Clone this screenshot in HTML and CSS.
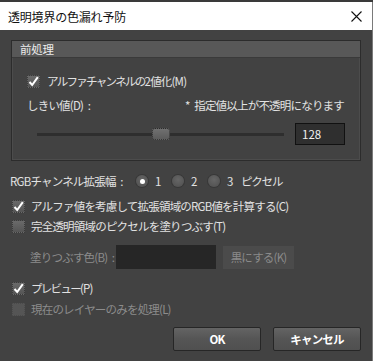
FILE: index.html
```html
<!DOCTYPE html>
<html lang="ja">
<head>
<meta charset="utf-8">
<link rel="stylesheet" href="styles.css">
</head>
<body>
<div class="window">
  <div class="titlebar">
    <span class="title">透明境界の色漏れ予防</span>
    <svg class="close" width="11" height="11" viewBox="0 0 11 11"><path d="M0.5 0.5 L10.5 10.5 M10.5 0.5 L0.5 10.5" stroke="#111" stroke-width="1.1" fill="none"/></svg>
  </div>
  <div class="content">
    <div class="group">
      <div class="group-head">前処理</div>
      <div class="group-body">
        <div class="row check-row g-first">
          <span class="cb checked"><svg width="11" height="11" viewBox="0 0 11 11"><path d="M1.5 6 L4.2 9 L9.8 1.2" stroke="#fff" stroke-width="2" fill="none"/></svg></span>
          <span><span class="kana">アルファチャンネルの</span>2値化(M)</span>
        </div>
        <div class="row thr-row">
          <span>しきい値(D)<span class="sp"> </span>:</span>
          <span>*<span class="sp"> </span>指定値以上が不透明になります</span>
        </div>
        <div class="row slider-row">
          <div class="track"><div class="thumb"></div></div>
          <div class="valbox">128</div>
        </div>
      </div>
    </div>

    <div class="row rgb-row">
      <span class="rgb-label">RGBチャンネル拡張幅<span class="sp"> </span>:</span>
      <span class="opt"><span class="radio on"></span><span>1</span></span>
      <span class="opt"><span class="radio"></span><span>2</span></span>
      <span class="opt opt3"><span class="radio"></span><span>3</span></span>
      <span class="kana-s">ピクセル</span>
    </div>

    <div class="row check-row main-check m1">
      <span class="cb checked"><svg width="11" height="11" viewBox="0 0 11 11"><path d="M1.5 6 L4.2 9 L9.8 1.2" stroke="#fff" stroke-width="2" fill="none"/></svg></span>
      <span>アルファ値を考慮して拡張領域のRGB値を計算する(C)</span>
    </div>
    <div class="row check-row main-check m2">
      <span class="cb"></span>
      <span>完全透明領域のピクセルを塗りつぶす(T)</span>
    </div>

    <div class="row fill-row">
      <span class="fill-label">塗りつぶす色(B)<span class="sp"> </span>:</span>
      <div class="colorbox"></div>
      <div class="btn-disabled">黒にする(K)</div>
    </div>

    <div class="row check-row main-check m3">
      <span class="cb checked"><svg width="11" height="11" viewBox="0 0 11 11"><path d="M1.5 6 L4.2 9 L9.8 1.2" stroke="#fff" stroke-width="2" fill="none"/></svg></span>
      <span><span class="kana">プレビュー</span>(P)</span>
    </div>
    <div class="row check-row main-check m4 disabled">
      <span class="cb dis"></span>
      <span>現在のレイヤーのみを処理(L)</span>
    </div>

    <div class="buttons">
      <div class="btn">OK</div>
      <div class="btn">キャンセル</div>
    </div>
  </div>
</div>
</body>
</html>
```

FILE: styles.css
```css
html, body {
  margin: 0;
  padding: 0;
  background: #3a3a3a;
  width: 373px;
  height: 361px;
  overflow: hidden;
}
body {
  font-family: "Noto Sans CJK JP", "Noto Sans", sans-serif;
  font-size: 11.5px;
  letter-spacing: -0.8px;
  color: #e2e2e2;
}
.sp {
  letter-spacing: 0;
  padding-right: 2px;
}
.kana {
  letter-spacing: -1.7px;
}
.kana-s {
  letter-spacing: -1.2px;
}
.window {
  margin-top: 2px;
  width: 372px;
  height: 359px;
  border-right: 1px solid #7a7a7a;
  background: #424242;
  display: flex;
  flex-direction: column;
}
.titlebar {
  height: 28px;
  flex: none;
  background: #ffffff;
  display: flex;
  align-items: center;
  justify-content: space-between;
  padding: 0 10px 0 8px;
}
.title {
  color: #111;
  font-size: 12px;
  letter-spacing: -0.2px;
}
.close {
  margin-top: 1px;
}
.content {
  padding: 10px 11px 0 10px;
  display: flex;
  flex-direction: column;
}
.row {
  display: flex;
  align-items: center;
  height: 16px;
  white-space: nowrap;
}
.group {
  margin-left: 1px;
  border: 1px solid #2c2c2c;
  background: #424242;
  box-shadow: inset 0 0 0 1px #4c4c4c;
}
.group-head {
  height: 16px;
  line-height: 16px;
  background: #585858;
  padding-left: 8px;
  color: #ececec;
  border-bottom: 1px solid #3a3a3a;
  letter-spacing: -0.3px;
}
.group-body {
  padding: 0 15px 15px 15px;
  display: flex;
  flex-direction: column;
}
.g-first {
  margin-top: 15px;
}
.check-row .cb {
  margin-right: 7px;
}
.cb {
  width: 13px;
  height: 13px;
  box-sizing: border-box;
  border: 1px dotted #3a3a3a;
  background: linear-gradient(#6a6a6a, #555555);
  display: flex;
  align-items: center;
  justify-content: center;
  flex: none;
}
.cb.dis {
  background: #555555;
  border-color: #4a4a4a;
}
.thr-row {
  margin-top: 8px;
  justify-content: space-between;
  padding-right: 1px;
}
.slider-row {
  margin-top: 10px;
  height: 22px;
  padding-left: 10px;
  gap: 11px;
}
.track {
  flex: 1;
  height: 3px;
  background: #2e2e2e;
  position: relative;
}
.thumb {
  position: absolute;
  left: 115px;
  top: -5px;
  width: 18px;
  height: 12px;
  box-sizing: border-box;
  border: 1px dotted #2a2a2a;
  border-radius: 3px;
  background: linear-gradient(#707070, #5c5c5c);
}
.valbox {
  width: 50px;
  height: 22px;
  box-sizing: border-box;
  border: 1px solid #111;
  background: #2f2f2f;
  padding-left: 6px;
  line-height: 20px;
  color: #f0f0f0;
  letter-spacing: 0;
}
.rgb-row {
  margin-top: 12px;
}
.rgb-label {
  width: 126px;
  flex: none;
}
.opt {
  display: inline-flex;
  align-items: center;
  gap: 7px;
  width: 36px;
  flex: none;
}
.opt3 {
  width: 33px;
}
.radio {
  width: 12px;
  height: 12px;
  border-radius: 50%;
  background: radial-gradient(circle at 50% 40%, #666, #4e4e4e);
  box-shadow: 0 0 0 1px #383838;
  display: flex;
  align-items: center;
  justify-content: center;
}
.radio.on::after {
  content: "";
  width: 5px;
  height: 5px;
  border-radius: 50%;
  background: #ffffff;
}
.main-check {
  padding-left: 2px;
}
.main-check .cb {
  margin-right: 6px;
}
.m1 { margin-top: 9px; }
.m2 { margin-top: 4px; }
.m3 { margin-top: 11px; }
.m4 { margin-top: 5px; }
.disabled { color: #8c8c8c; }
.fill-row {
  margin-top: 11px;
  height: 24px;
}
.fill-label {
  width: 86px;
  flex: none;
  padding-left: 20px;
  color: #8c8c8c;
}
.colorbox {
  width: 100px;
  height: 24px;
  flex: none;
  background: #262626;
}
.btn-disabled {
  margin-left: 7px;
  width: 71px;
  height: 23px;
  line-height: 23px;
  text-align: center;
  background: #4b4b4b;
  color: #8a8a8a;
}
.buttons {
  margin-top: 10px;
  display: flex;
  justify-content: flex-end;
  gap: 12px;
}
.btn {
  width: 88px;
  height: 24px;
  box-sizing: border-box;
  border: 1px solid #262626;
  border-radius: 2px;
  background: linear-gradient(#646464, #555555 50%, #505050);
  color: #ffffff;
  font-weight: bold;
  text-align: center;
  line-height: 22px;
}
```
